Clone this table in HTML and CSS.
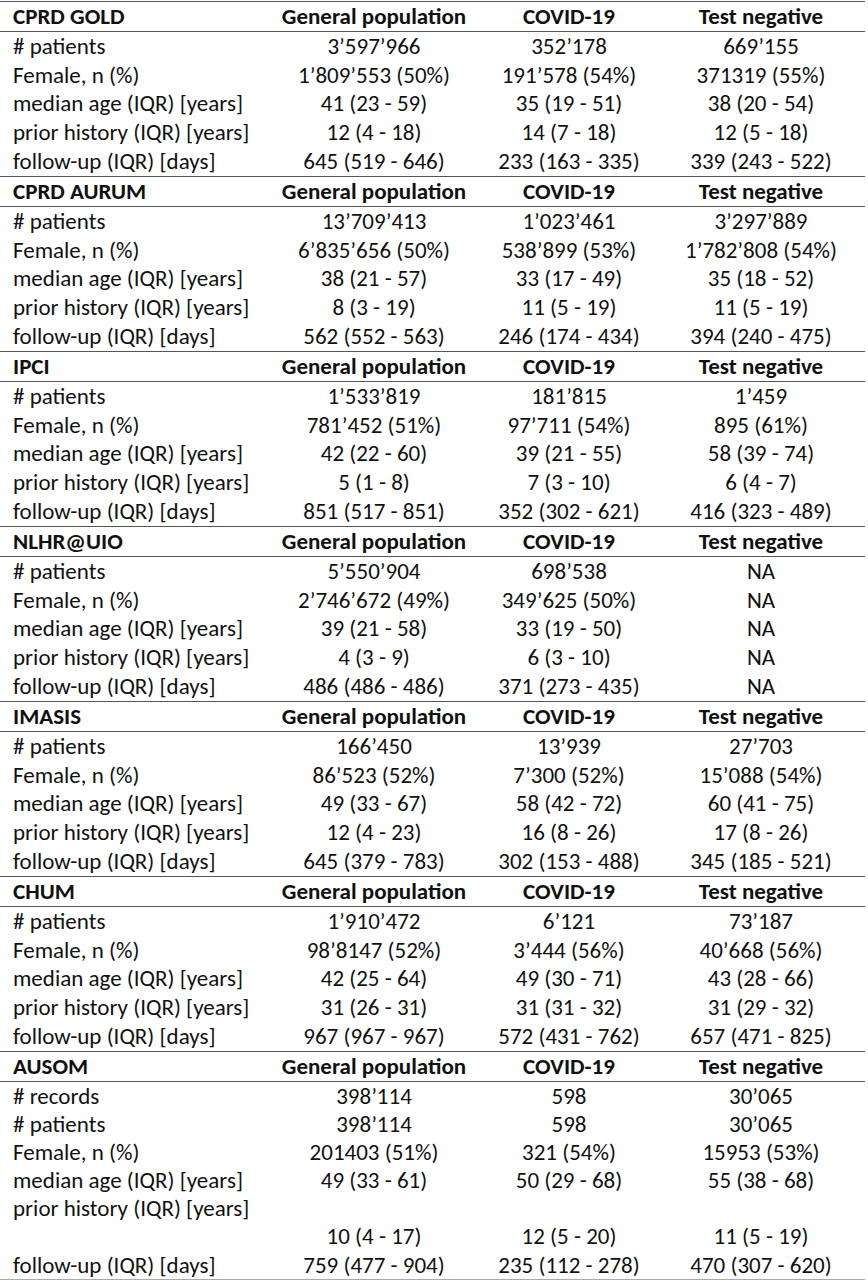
FILE: index.html
```html
<!DOCTYPE html>
<html lang="en">
<head>
    <meta charset="UTF-8">
    <meta name="viewport" content="width=device-width, initial-scale=1.0">
    <title>Cohort characteristics</title>
    <link rel="stylesheet" href="styles.css">
</head>
<body>
    <div class="table" id="cohorts"></div>

    <script>
        const cols = ["General population", "COVID-19", "Test negative"];

        const databases = [
            { name: "CPRD GOLD", rows: [
                ["# patients", "3’597’966", "352’178", "669’155"],
                ["Female, n (%)", "1’809’553 (50%)", "191’578 (54%)", "371319 (55%)"],
                ["median age (IQR) [years]", "41 (23 - 59)", "35 (19 - 51)", "38 (20 - 54)"],
                ["prior history (IQR) [years]", "12 (4 - 18)", "14 (7 - 18)", "12 (5 - 18)"],
                ["follow-up (IQR) [days]", "645 (519 - 646)", "233 (163 - 335)", "339 (243 - 522)"]
            ]},
            { name: "CPRD AURUM", rows: [
                ["# patients", "13’709’413", "1’023’461", "3’297’889"],
                ["Female, n (%)", "6’835’656 (50%)", "538’899 (53%)", "1’782’808 (54%)"],
                ["median age (IQR) [years]", "38 (21 - 57)", "33 (17 - 49)", "35 (18 - 52)"],
                ["prior history (IQR) [years]", "8 (3 - 19)", "11 (5 - 19)", "11 (5 - 19)"],
                ["follow-up (IQR) [days]", "562 (552 - 563)", "246 (174 - 434)", "394 (240 - 475)"]
            ]},
            { name: "IPCI", rows: [
                ["# patients", "1’533’819", "181’815", "1’459"],
                ["Female, n (%)", "781’452 (51%)", "97’711 (54%)", "895 (61%)"],
                ["median age (IQR) [years]", "42 (22 - 60)", "39 (21 - 55)", "58 (39 - 74)"],
                ["prior history (IQR) [years]", "5 (1 - 8)", "7 (3 - 10)", "6 (4 - 7)"],
                ["follow-up (IQR) [days]", "851 (517 - 851)", "352 (302 - 621)", "416 (323 - 489)"]
            ]},
            { name: "NLHR@UIO", rows: [
                ["# patients", "5’550’904", "698’538", "NA"],
                ["Female, n (%)", "2’746’672 (49%)", "349’625 (50%)", "NA"],
                ["median age (IQR) [years]", "39 (21 - 58)", "33 (19 - 50)", "NA"],
                ["prior history (IQR) [years]", "4 (3 - 9)", "6 (3 - 10)", "NA"],
                ["follow-up (IQR) [days]", "486 (486 - 486)", "371 (273 - 435)", "NA"]
            ]},
            { name: "IMASIS", rows: [
                ["# patients", "166’450", "13’939", "27’703"],
                ["Female, n (%)", "86’523 (52%)", "7’300 (52%)", "15’088 (54%)"],
                ["median age (IQR) [years]", "49 (33 - 67)", "58 (42 - 72)", "60 (41 - 75)"],
                ["prior history (IQR) [years]", "12 (4 - 23)", "16 (8 - 26)", "17 (8 - 26)"],
                ["follow-up (IQR) [days]", "645 (379 - 783)", "302 (153 - 488)", "345 (185 - 521)"]
            ]},
            { name: "CHUM", rows: [
                ["# patients", "1’910’472", "6’121", "73’187"],
                ["Female, n (%)", "98’8147 (52%)", "3’444 (56%)", "40’668 (56%)"],
                ["median age (IQR) [years]", "42 (25 - 64)", "49 (30 - 71)", "43 (28 - 66)"],
                ["prior history (IQR) [years]", "31 (26 - 31)", "31 (31 - 32)", "31 (29 - 32)"],
                ["follow-up (IQR) [days]", "967 (967 - 967)", "572 (431 - 762)", "657 (471 - 825)"]
            ]},
            { name: "AUSOM", last: true, rows: [
                ["# records", "398’114", "598", "30’065"],
                ["# patients", "398’114", "598", "30’065"],
                ["Female, n (%)", "201403 (51%)", "321 (54%)", "15953 (53%)"],
                ["median age (IQR) [years]", "49 (33 - 61)", "50 (29 - 68)", "55 (38 - 68)"],
                ["prior history (IQR) [years]", "", "", ""],
                ["", "10 (4 - 17)", "12 (5 - 20)", "11 (5 - 19)"],
                ["follow-up (IQR) [days]", "759 (477 - 904)", "235 (112 - 278)", "470 (307 - 620)"]
            ]}
        ];

        function buildTable() {
            const table = document.getElementById("cohorts");
            const fragment = document.createDocumentFragment();

            databases.forEach(db => {
                const section = document.createElement("div");
                section.className = db.last ? "db last" : "db";

                const head = document.createElement("div");
                head.className = "row head";
                head.innerHTML = `<span>${db.name}</span>` + cols.map(c => `<span>${c}</span>`).join("");
                section.appendChild(head);

                db.rows.forEach(r => {
                    const row = document.createElement("div");
                    row.className = "row";
                    row.innerHTML = r.map(v => `<span>${v}</span>`).join("");
                    section.appendChild(row);
                });

                fragment.appendChild(section);
            });

            table.appendChild(fragment);
        }

        buildTable();
    </script>
</body>
</html>
```

FILE: styles.css
```css
body {
    margin: 0;
    padding: 0;
    background-color: #ffffff;
    font-family: Carlito, Lato, sans-serif;
    font-size: 23px;
    color: #111;
}

.table {
    width: 865px;
    padding-top: 1px;
}

.row {
    display: grid;
    grid-template-columns: 277px 194px 196px 1fr;
    align-items: center;
    height: 28.8px;
    line-height: 1;
}

.row span {
    text-align: center;
    white-space: nowrap;
}

.row span:first-child {
    text-align: left;
    padding-left: 13px;
}

.row span:last-child {
    padding-right: 10px;
}

.head {
    height: 29px;
    font-weight: bold;
    border-top: 1px solid #555;
    border-bottom: 1px solid #555;
}

.last .row {
    height: 28.2px;
}

.last .head {
    height: 29px;
}

.last {
    border-bottom: 1px solid #aaa;
}
```
